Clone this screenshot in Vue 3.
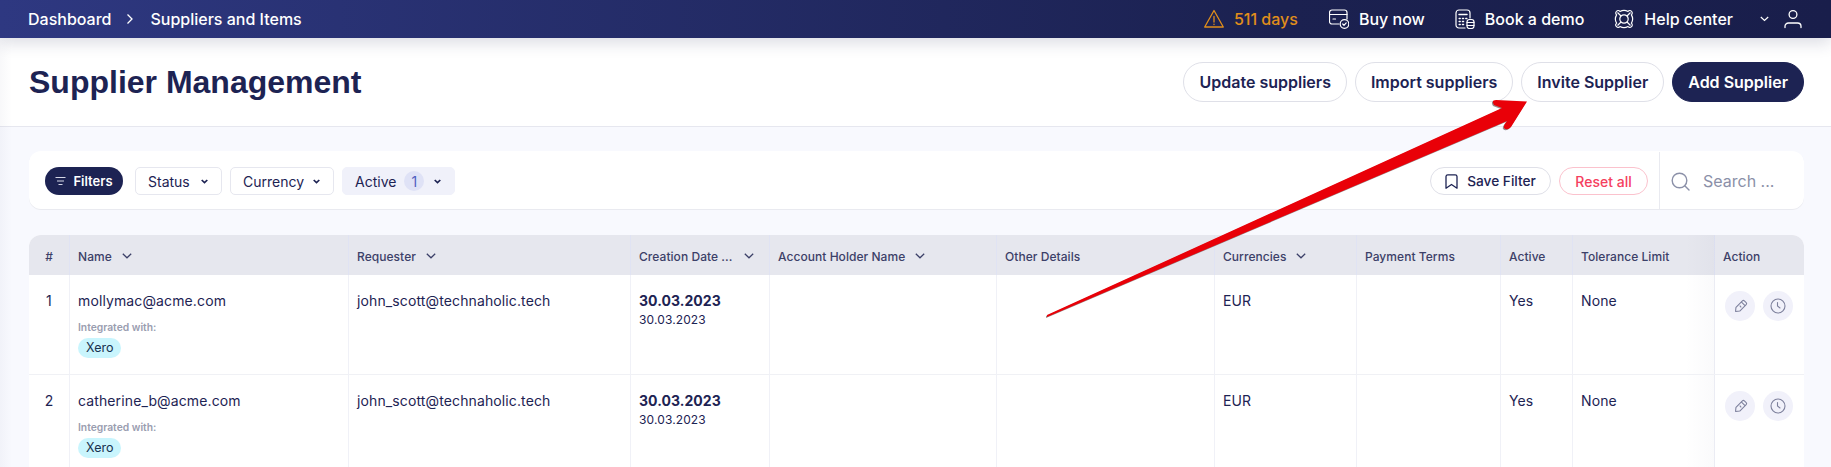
<script setup>
const rows = [
  { n: 1, name: 'mollymac@acme.com' },
  { n: 2, name: 'catherine_b@acme.com' }
]
const columns = [
  { label: '#', w: 40 },
  { label: 'Name', w: 279, sort: true },
  { label: 'Requester', w: 282, sort: true },
  { label: 'Creation Date ...', w: 139, sort: true, spread: true },
  { label: 'Account Holder Name', w: 227, sort: true },
  { label: 'Other Details', w: 218 },
  { label: 'Currencies', w: 142, sort: true },
  { label: 'Payment Terms', w: 144 },
  { label: 'Active', w: 72 },
  { label: 'Tolerance Limit', w: 142 },
  { label: 'Action', w: 90 }
]
</script>

<template>
  <div class="page">
    <header class="topbar">
      <nav class="crumbs">
        <span>Dashboard</span>
        <svg class="crumb-sep" width="8" height="12" viewBox="0 0 8 12" fill="none" stroke="#fff" stroke-width="1.3"><path d="M1.5 1.5 6 6l-4.500 4.500"/></svg>
        <span>Suppliers and Items</span>
      </nav>
      <div class="tools">
        <span class="tool warn">
          <svg width="20" height="20" viewBox="0 0 20 20" fill="none" stroke="#e08e1b" stroke-width="1.3" stroke-linejoin="round" stroke-linecap="round"><path d="M10 1.500 19.300 18H.7z"/><path d="M10 7.500v5.500M10 15.200v.3"/></svg>
          511 days
        </span>
        <span class="tool buy">
          <svg width="20" height="20" viewBox="0 0 20 20" fill="none" stroke="#fff" stroke-width="1.200" stroke-linecap="round" stroke-linejoin="round"><path d="M10 15H3a2.500 2.500 0 0 1-2.500-2.500v-9A2.500 2.500 0 0 1 3 1h12.500A2.500 2.500 0 0 1 18 3.500V10"/><path d="M.6 5.500H18M4 10h2.500"/><circle cx="15.500" cy="15" r="4.300"/><path d="m13.700 15 1.300 1.300 2.200-2.400"/></svg>
          Buy now
        </span>
        <span class="tool book">
          <svg width="20" height="20" viewBox="0 0 20 20" fill="none" stroke="#fff" stroke-width="1.200" stroke-linecap="round" stroke-linejoin="round"><path d="M10 19H4a3 3 0 0 1-3-3V4a3 3 0 0 1 3-3h8a3 3 0 0 1 3 3v5"/><path d="M4 5.500h8M4.200 9.500h1M7.500 9.500h1M10.800 9.500h1M4.200 12.500h1M7.500 12.500h1M4.200 15.500h1M7.500 15.500h1" stroke-width="1.500"/><rect x="12" y="10.500" width="7" height="9" rx="2.500"/><path d="M12 13.500h7M12 16.500h7"/></svg>
          Book a demo
        </span>
        <span class="tool help">
          <svg width="20" height="20" viewBox="0 0 20 20" fill="none" stroke="#fff" stroke-width="1.200"><circle cx="10" cy="10" r="4.200"/><path d="M6 2.500C8.500 1 11.500 1 14 2.500c1-1.300 2.500-1.300 3.500-.2 1 1 1 2.500-.1 3.600 1.600 2.600 1.600 5.600 0 8.200 1.100 1.100 1.100 2.600.1 3.600-1 1-2.500 1.100-3.500-.2-2.500 1.500-5.500 1.500-8 0-1 1.300-2.500 1.200-3.500.2-1-1-1-2.500.1-3.600-1.600-2.600-1.600-5.600 0-8.200C1.500 4.800 1.500 3.300 2.500 2.300c1-1.100 2.500-1.100 3.500.2z"/><path d="M7 7 3.500 3.500M13 7l3.500-3.500M7 13l-3.500 3.500M13 13l3.500 3.500"/></svg>
          Help center
        </span>
        <svg class="user-chev" width="9" height="6" viewBox="0 0 9 6" fill="none" stroke="#fff" stroke-width="1.200"><path d="m.8 1 3.700 3.500L8.200 1"/></svg>
        <svg class="user" width="18" height="20" viewBox="0 0 18 20" fill="none" stroke="#fff" stroke-width="1.300" stroke-linecap="round"><circle cx="9" cy="5.500" r="3.900"/><path d="M1 18.500v-1.200c0-2 1.500-3.300 3.500-3.300h9c2 0 3.500 1.300 3.500 3.300v1.200"/></svg>
      </div>
    </header>

    <section class="heading">
      <h1>Supplier Management</h1>
      <div class="heading-actions">
        <button class="pill">Update suppliers</button>
        <button class="pill">Import suppliers</button>
        <button class="pill invite">Invite Supplier</button>
        <button class="pill primary">Add Supplier</button>
      </div>
    </section>

    <main class="content">
      <div class="filters">
        <div class="filter-left">
          <button class="filters-btn">
            <svg width="11" height="10" viewBox="0 0 11 10" fill="none" stroke="#d5d7e6" stroke-width="1.200"><path d="M.5 1.500h10M2 5h7M3.500 8.500h4"/></svg>
            Filters
          </button>
          <button class="chip chip-status">Status <svg width="7" height="5" viewBox="0 0 7 5" fill="none" stroke="#1d2353" stroke-width="1.700"><path d="m.7 1 2.800 2.600L6.300 1"/></svg></button>
          <button class="chip chip-currency">Currency <svg width="7" height="5" viewBox="0 0 7 5" fill="none" stroke="#1d2353" stroke-width="1.700"><path d="m.7 1 2.800 2.600L6.300 1"/></svg></button>
          <button class="chip chip-active">Active <span class="count">1</span> <svg class="push" width="7" height="5" viewBox="0 0 7 5" fill="none" stroke="#1d2353" stroke-width="1.700"><path d="m.7 1 2.800 2.600L6.300 1"/></svg></button>
        </div>
        <div class="filter-right">
          <button class="save">
            <svg width="13" height="15" viewBox="0 0 13 15" fill="none" stroke="#1d2353" stroke-width="1.300" stroke-linejoin="round"><path d="M1 2.500A1.800 1.800 0 0 1 2.800.8h7.400A1.800 1.800 0 0 1 12 2.500v11.700L6.500 10.500 1 14.200z"/></svg>
            Save Filter
          </button>
          <button class="reset">Reset all</button>
        </div>
        <div class="search">
          <svg width="19" height="19" viewBox="0 0 19 19" fill="none" stroke="#8b90a8" stroke-width="1.400" stroke-linecap="round"><circle cx="8.500" cy="8.500" r="7.300"/><path d="m14 14 4 4"/></svg>
          <span>Search ...</span>
        </div>
      </div>

      <table class="grid">
        <colgroup>
          <col v-for="c in columns" :key="c.label" :style="{ width: c.w + 'px' }" />
        </colgroup>
        <thead>
          <tr>
            <th v-for="c in columns" :key="c.label" :class="{ center: c.label === '#', act: c.label === 'Action' }">
              <span class="th-inner" :class="{ spread: c.spread }">
                {{ c.label }}
                <svg v-if="c.sort" width="10" height="6" viewBox="0 0 10 6" fill="none" stroke="#3c4068" stroke-width="1.300"><path d="m.8.800 4.200 4 4.200-4"/></svg>
              </span>
            </th>
          </tr>
        </thead>
        <tbody>
          <tr v-for="r in rows" :key="r.n">
            <td class="center">{{ r.n }}</td>
            <td>
              <div>{{ r.name }}</div>
              <div class="integrated">Integrated with:</div>
              <span class="tag">Xero</span>
            </td>
            <td>john_scott@technaholic.tech</td>
            <td>
              <div class="date">30.03.2023</div>
              <div class="subdate">30.03.2023</div>
            </td>
            <td></td>
            <td></td>
            <td>EUR</td>
            <td></td>
            <td>Yes</td>
            <td>None</td>
            <td class="act">
              <div class="act-row">
                <span class="round">
                  <svg width="15" height="15" viewBox="0 0 14 14" fill="none" stroke="#7d809c" stroke-width="1" stroke-linejoin="round"><g transform="rotate(45 7 7)"><path d="M4.500 2a1.300 1.300 0 0 1 1.300-1.300h2.400A1.300 1.300 0 0 1 9.500 2v8.500L7 13.500l-2.500-3z"/><path d="M4.500 3.500h5M6 7h2"/></g></svg>
                </span>
                <span class="round">
                  <svg width="16" height="16" viewBox="0 0 16 16" fill="none" stroke="#7d809c" stroke-width="1.100" stroke-linecap="round"><circle cx="8" cy="8" r="7"/><path d="M7.500 4.500V8l2.500 2"/></svg>
                </span>
              </div>
            </td>
          </tr>
        </tbody>
      </table>
    </main>

    <svg class="arrow" width="1831" height="467" viewBox="0 0 1831 467">
      <path d="M1047 317 L1047 315 L1502 108 L1494 105 Q1491 100 1496 100 L1527 101.500 L1511 127 Q1507 131 1504 128 Q1503 126 1507 121 Z" fill="#e90008"/>
    </svg>
  </div>
</template>

<style>
html, body { margin: 0; background: #f8f9fe; }
</style>

<style scoped>
.page {
  position: relative;
  width: 1831px;
  height: 467px;
  overflow: hidden;
  background: #f8f9fe;
  color: #1d2353;
  font-family: Inter, "Liberation Sans", sans-serif;
  font-size: 14px;
}
.page::before {
  content: "";
  position: absolute;
  left: 0;
  top: 38px;
  bottom: 0;
  width: 12px;
  background: linear-gradient(90deg, rgba(30, 35, 90, .03), rgba(30, 35, 90, 0));
  z-index: 2;
}
.topbar {
  position: relative;
  z-index: 3;
  height: 38px;
  display: flex;
  align-items: center;
  justify-content: space-between;
  padding: 0 29px 0 28px;
  background: linear-gradient(90deg, #2e3881 0%, #1b2150 70%, #191e4b 100%);
  box-shadow: 0 5px 16px rgba(29, 35, 83, .16);
  color: #fff;
  font-size: 16px;
  font-weight: 500;
}
.crumbs { display: flex; align-items: center; }
.crumb-sep { margin: 0 16px 0 15px; }
.tools { display: flex; align-items: center; }
.tool { display: flex; align-items: center; gap: 10px; white-space: nowrap; }
.warn { color: #e08e1b; margin-right: 31px; }
.buy { margin-right: 30px; }
.book { margin-right: 30px; }
.help { margin-right: 27px; }
.user-chev { margin-right: 15px; }

.heading {
  height: 89px;
  box-sizing: border-box;
  display: flex;
  align-items: center;
  justify-content: space-between;
  padding: 0 27px 0 29px;
  background: #fff;
  border-bottom: 1px solid #e6e7ef;
}
h1 {
  margin: 0;
  font-family: "Liberation Sans", Arial, sans-serif;
  font-size: 32px;
  font-weight: 700;
  color: #1d2353;
}
.heading-actions { display: flex; gap: 8px; }
.pill {
  height: 40px;
  padding: 0 15px;
  border: 1px solid #dfe0e8;
  border-radius: 20px;
  background: #fff;
  color: #1d2353;
  font: 600 16px Inter, sans-serif;
  white-space: nowrap;
}
.pill.primary { background: #1d2353; border-color: #1d2353; color: #fff; }

.content { padding: 24px 27px 0 29px; }
.filters {
  height: 59px;
  box-sizing: border-box;
  display: flex;
  align-items: center;
  background: #fff;
  box-shadow: inset 0 -1px 0 #e9eaf0;
  border-radius: 12px;
  padding: 1px 0 0 16px;
}
.filter-left { display: flex; align-items: center; gap: 8px; }
.filters-btn {
  height: 28px;
  width: 78px;
  margin-right: 4px;
  display: flex;
  align-items: center;
  justify-content: center;
  gap: 7px;
  border: 0;
  padding: 0;
  border-radius: 14px;
  background: #1d2353;
  color: #fff;
  font: 600 13px Inter, sans-serif;
}
.chip {
  height: 28px;
  box-sizing: border-box;
  display: flex;
  align-items: center;
  justify-content: space-between;
  padding: 0 13px 0 12px;
  border: 1px solid #e6e7ef;
  border-radius: 5px;
  background: #fff;
  color: #1d2353;
  font: 400 14px Inter, sans-serif;
}
.chip-status { width: 87px; }
.chip-currency { width: 104px; }
.chip-active {
  width: 113px;
  justify-content: flex-start;
  background: #f0f1fa;
  border-color: #f0f1fa;
}
.push { margin-left: auto; }
.count {
  width: 20px;
  height: 20px;
  margin-left: 8px;
  display: flex;
  align-items: center;
  justify-content: center;
  border-radius: 50%;
  background: #dfe2f6;
  color: #4f5fc0;
}
.filter-right { margin-left: auto; display: flex; align-items: center; gap: 8px; }
.save {
  width: 121px;
  height: 28px;
  display: flex;
  align-items: center;
  justify-content: center;
  gap: 9px;
  padding: 0;
  border: 1px solid #dfe0e8;
  border-radius: 14px;
  background: #fff;
  color: #1d2353;
  font: 500 13.700px Inter, sans-serif;
}
.reset {
  width: 89px;
  height: 28px;
  padding: 0;
  border: 1px solid #fbc2cd;
  border-radius: 14px;
  background: #fff;
  color: #f5405e;
  font: 500 14px Inter, sans-serif;
}
.search {
  margin-left: 11px;
  width: 145px;
  height: 58px;
  box-sizing: border-box;
  display: flex;
  align-items: center;
  gap: 13px;
  padding-left: 11px;
  border-left: 1px solid #e9eaf0;
  color: #8b90a8;
  font-size: 16px;
}

.grid {
  margin-top: 25px;
  width: 1775px;
  table-layout: fixed;
  border-collapse: separate;
  border-spacing: 0;
  background: #fff;
  border-radius: 12px 12px 0 0;
}
th {
  height: 40px;
  box-sizing: border-box;
  padding: 2px 0 0 8px;
  text-align: left;
  background: #e6e7ee;
  border-left: 1px solid #e0e3f3;
  color: #3c4068;
  font-size: 12px;
  font-weight: 500;
  letter-spacing: .05px;
  white-space: nowrap;
}
th:first-child { border-left: 0; border-top-left-radius: 12px; }
th:last-child { border-top-right-radius: 12px; }
.th-inner { display: flex; align-items: center; gap: 10px; }
.th-inner.spread { justify-content: space-between; padding-right: 15px; }
th.center { text-align: center; padding: 2px 0 0; }
th.center .th-inner { justify-content: center; }
td {
  height: 100px;
  box-sizing: border-box;
  padding: 17px 0 0 8px;
  vertical-align: top;
  border-left: 1px solid #f0f1f7;
  border-bottom: 1px solid #f0f1f5;
  line-height: 18px;
  letter-spacing: .12px;
}
td:first-child { border-left: 0; }
td.center { text-align: center; padding-left: 0; }
.integrated {
  margin-top: 9px;
  font-size: 10.300px;
  line-height: 16px;
  font-weight: 600;
  letter-spacing: 0;
  color: #9a9db0;
}
.tag {
  display: inline-block;
  margin-top: 3px;
  padding: 0 8px;
  height: 20px;
  line-height: 20px;
  border-radius: 10px;
  background: #c9f5fd;
  font-size: 12.500px;
  letter-spacing: 0;
  color: #17314f;
}
.date { font-weight: 700; font-size: 14px; letter-spacing: .05px; }
.subdate { margin-top: 1px; font-size: 12px; }
th.act, td.act { position: relative; }
th.act::before, td.act::before {
  content: "";
  position: absolute;
  top: 0;
  bottom: 0;
  left: -30px;
  width: 30px;
  background: linear-gradient(90deg, rgba(30, 35, 90, 0), rgba(30, 35, 90, .025));
}
td.act { padding: 16px 0 0 10px; }
.act-row { display: flex; gap: 8px; }
.round {
  width: 30px;
  height: 30px;
  display: flex;
  align-items: center;
  justify-content: center;
  border-radius: 50%;
  background: #f1f1fa;
}
.arrow {
  position: absolute;
  left: 0;
  top: 0;
  z-index: 5;
  pointer-events: none;
  filter: drop-shadow(-.5px 1px .6px rgba(70, 40, 40, .55));
}
</style>
